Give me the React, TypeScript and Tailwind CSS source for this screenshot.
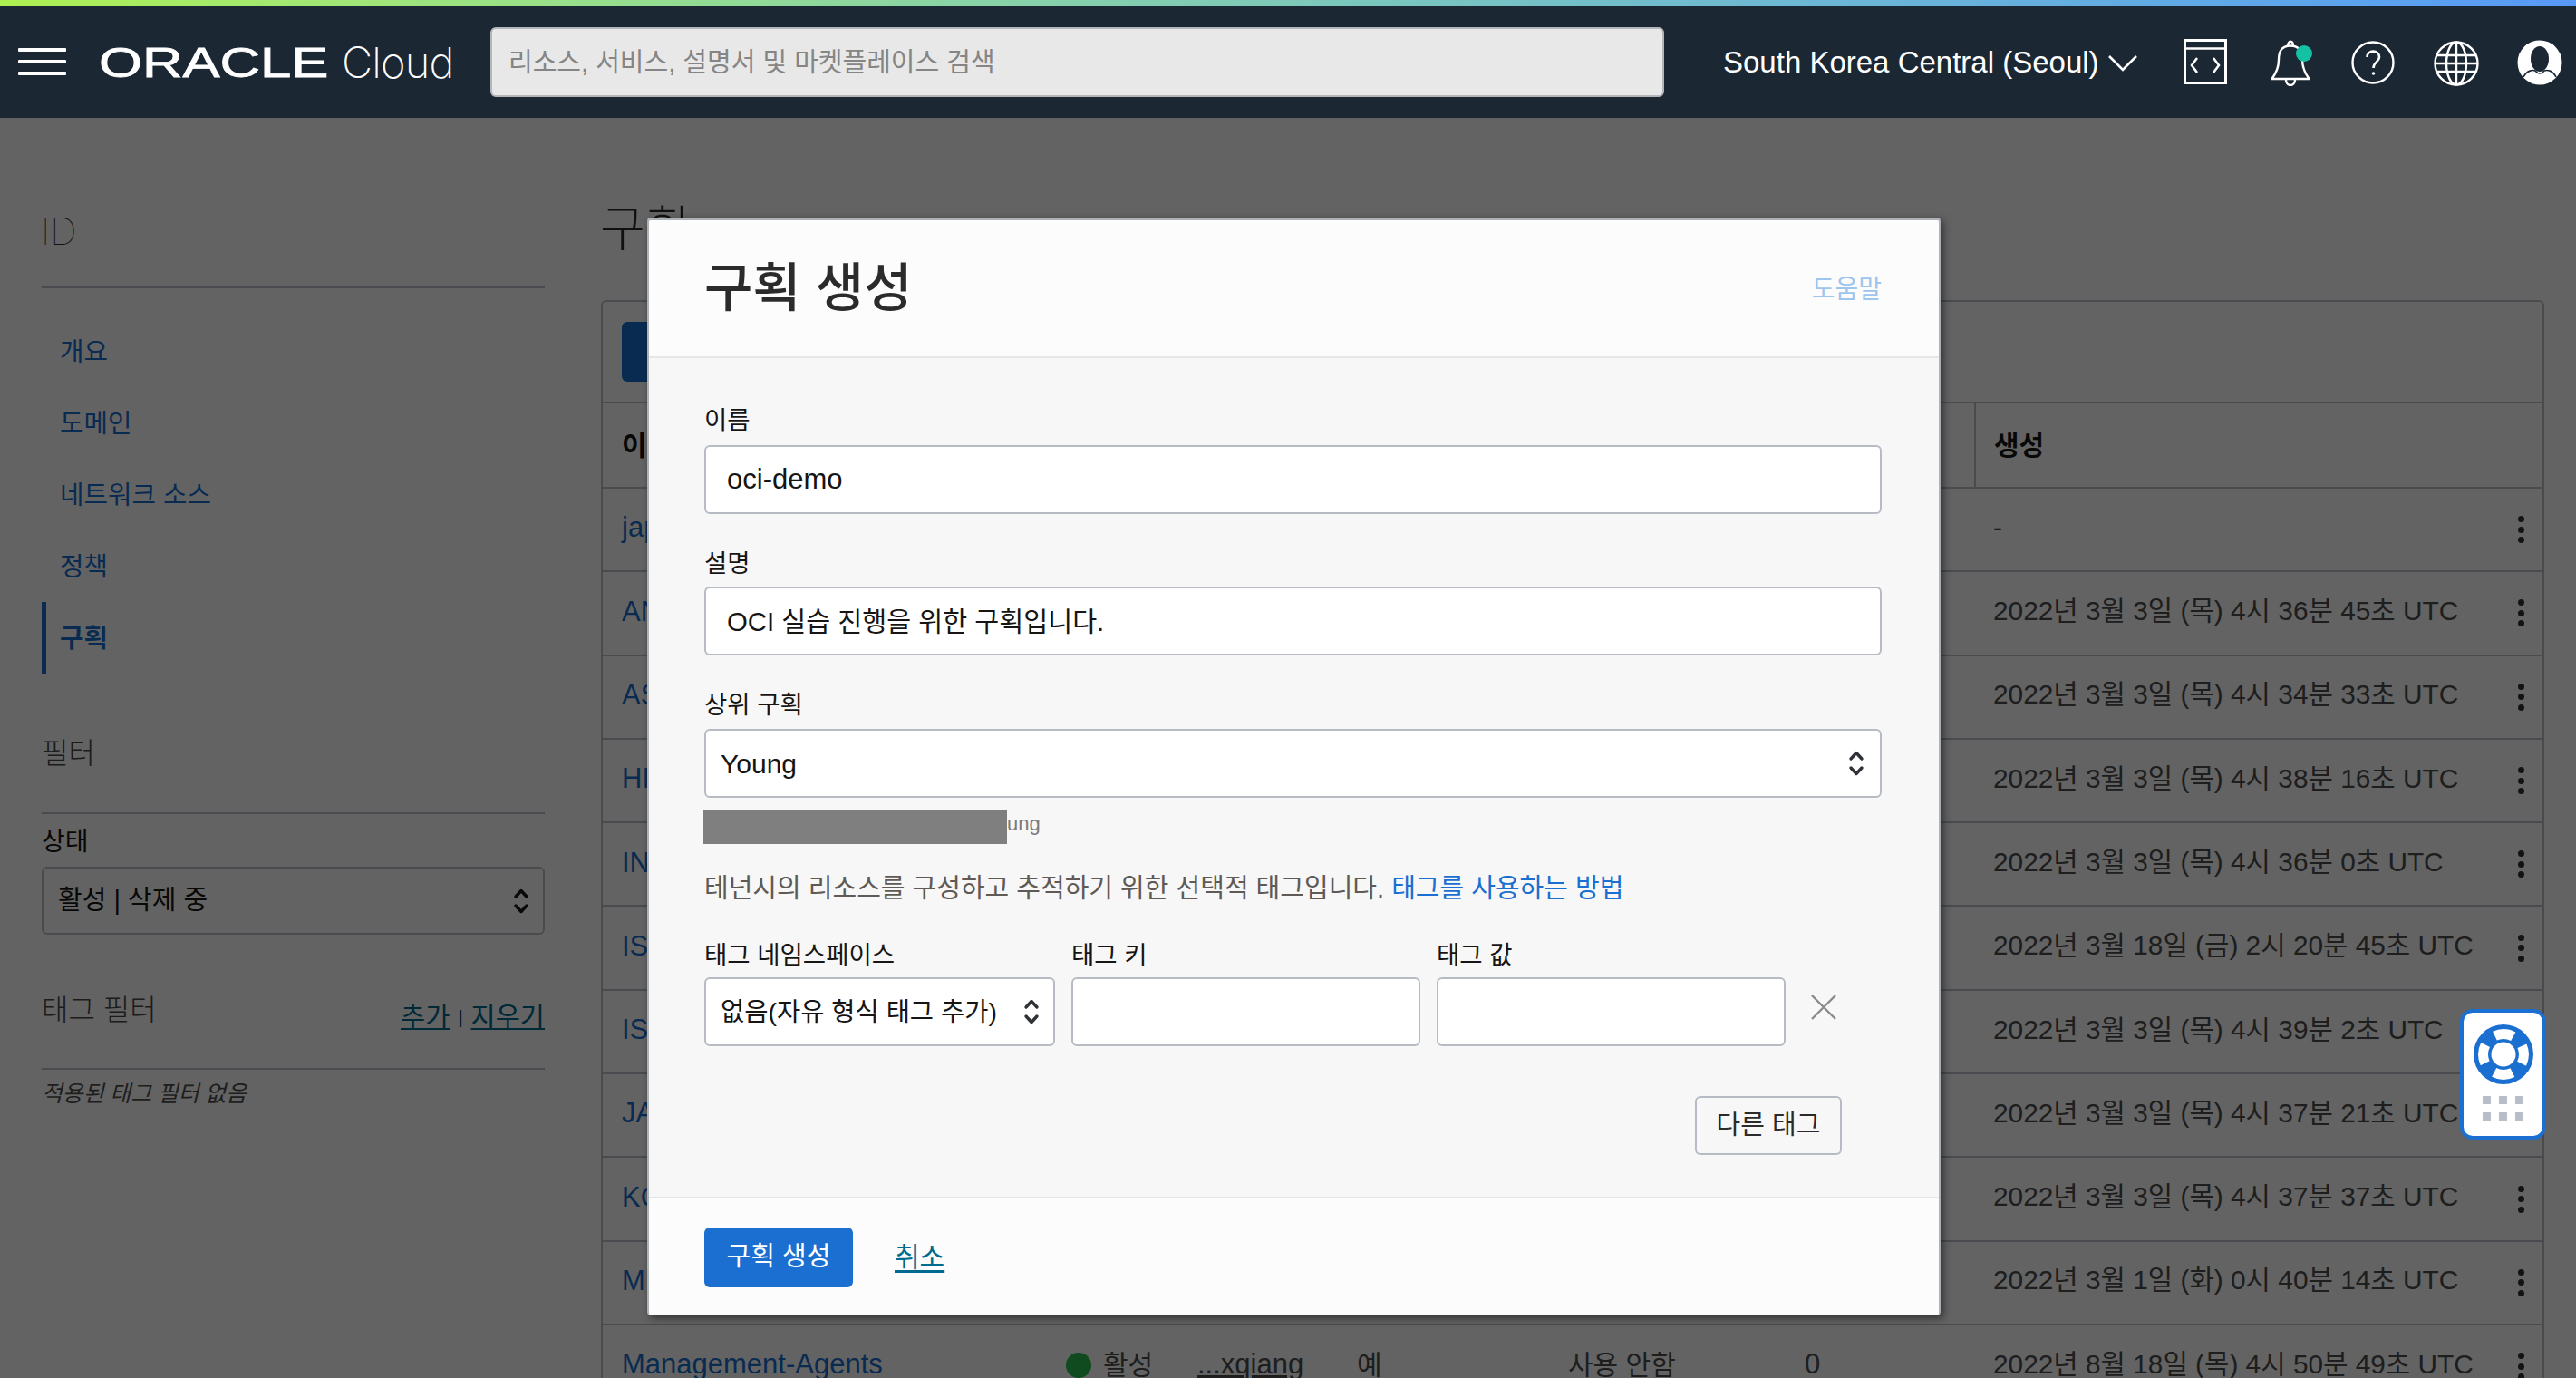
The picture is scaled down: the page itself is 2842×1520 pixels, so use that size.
import { ReactNode } from "react"

const rows = [
  { name: "jap", date: "-" },
  { name: "AN", date: "2022년 3월 3일 (목) 4시 36분 45초 UTC" },
  { name: "AS", date: "2022년 3월 3일 (목) 4시 34분 33초 UTC" },
  { name: "HI", date: "2022년 3월 3일 (목) 4시 38분 16초 UTC" },
  { name: "IN", date: "2022년 3월 3일 (목) 4시 36분 0초 UTC" },
  { name: "IS", date: "2022년 3월 18일 (금) 2시 20분 45초 UTC" },
  { name: "IS", date: "2022년 3월 3일 (목) 4시 39분 2초 UTC" },
  { name: "JA", date: "2022년 3월 3일 (목) 4시 37분 21초 UTC" },
  { name: "KO", date: "2022년 3월 3일 (목) 4시 37분 37초 UTC" },
  { name: "M", date: "2022년 3월 1일 (화) 0시 40분 14초 UTC" },
]

const navItems = ["개요", "도메인", "네트워크 소스", "정책"]

function Updown({ className }: { className: string }) {
  return (
    <svg width="20" height="32" viewBox="0 0 20 32" fill="none" stroke="currentColor" strokeWidth="3.4" strokeLinecap="round" strokeLinejoin="round" className={className}>
      <path d="M4 11 L10 4.5 L16 11" />
      <path d="M4 21 L10 27.5 L16 21" />
    </svg>
  )
}

function Kebab() {
  return (
    <div className="flex flex-col gap-[4.5px]">
      <div className="w-[7px] h-[7px] rounded-full bg-[#2f3338]" />
      <div className="w-[7px] h-[7px] rounded-full bg-[#2f3338]" />
      <div className="w-[7px] h-[7px] rounded-full bg-[#2f3338]" />
    </div>
  )
}

function Row({ name, date, children }: { name: string; date: string; children?: ReactNode }) {
  return (
    <div className="h-[92.3px] shrink-0 border-t-2 border-[#bcc2c9] flex items-center pl-[21px] text-[#4d4d4d]">
      <a className="w-[490px] -mt-[3px] text-[31px] text-[#1a6fd0] whitespace-nowrap">{name}</a>
      <div className="w-[1023px] -mt-[3px] flex items-center text-[31px] whitespace-nowrap">{children}</div>
      <div className="flex-1 -mt-[4px] text-[29.8px] whitespace-nowrap">{date}</div>
      <div className="w-[27px]">
        <Kebab />
      </div>
    </div>
  )
}

function Sidebar() {
  return (
    <aside className="w-[555px] ml-[46px] shrink-0">
      <div className="h-[188px] pt-[98px] border-b-2 border-[#bcc2c9]">
        <h2 className="text-[41px] leading-[54px] font-thin font-['Inter'] text-[#333] -ml-[1px]">ID</h2>
      </div>
      <nav className="mt-[30px] flex flex-col">
        {navItems.map((item) => (
          <a key={item} className="h-[79px] flex items-center border-l-4 border-transparent pl-[16px] pt-[2px] text-[28.8px] text-[#1a6fd0]">
            {item}
          </a>
        ))}
        <a className="h-[79px] flex items-center border-l-[5px] border-[#1a6fd0] pl-[15px] pt-[3px] text-[28.8px] font-bold text-[#1a6fd0]">구획</a>
      </nav>
      <div className="mt-[68px] h-[87px] border-b-2 border-[#bcc2c9]">
        <h3 className="text-[32px] leading-[40px] font-light text-[#4a4a4a]">필터</h3>
      </div>
      <div className="mt-[10px] h-[40px] text-[28px] leading-[42px] text-[#161513]">상태</div>
      <div className="mt-[8px] h-[75px] border-2 border-[#bcc2c9] rounded-[6px] flex items-center justify-between pl-[16px] pr-[14px] text-[29px] text-[#161513]">
        <span>활성 | 삭제 중</span>
        <Updown className="text-[#161513]" />
      </div>
      <div className="mt-[63px] h-[86px] border-b-2 border-[#bcc2c9] flex justify-between items-start">
        <h3 className="text-[32px] leading-[40px] font-light text-[#4a4a4a]">태그 필터</h3>
        <div className="mt-[8px] text-[29.5px] leading-[40px] text-[#006b8f] flex items-center gap-[9px]">
          <a className="underline">추가</a>
          <span className="text-[20px] text-[#333]">|</span>
          <a className="underline">지우기</a>
        </div>
      </div>
      <p className="mt-[10px] text-[24.8px] leading-[34px] italic text-[#4f4f4f]">적용된 태그 필터 없음</p>
    </aside>
  )
}

function Compartments() {
  return (
    <main className="w-[2144px] ml-[62px] shrink-0">
      <div className="h-[201px] pt-[96px]">
        <h1 className="text-[54px] leading-[54px] font-light text-[#312d2a] -ml-[1px]">구획</h1>
      </div>
      <div className="border-x-2 border-t-2 border-[#bcc2c9] rounded-t-[6px] flex flex-col">
        <div className="h-[110px] pt-[22px] pl-[21px]">
          <div className="w-[200px] h-[66px] rounded-[6px] bg-[#1a6fd0]" />
        </div>
        <div className="h-[94px] border-t-2 border-[#bcc2c9] flex items-stretch pl-[21px] text-[30px] font-bold text-[#161513]">
          <div className="w-[1492px] flex items-center">이</div>
          <div className="flex-1 border-l-2 border-[#bcc2c9] flex items-center pl-[20px]">생성</div>
        </div>
        {rows.map((row, i) => (
          <Row key={i} name={row.name} date={row.date} />
        ))}
        <Row name="Management-Agents" date="2022년 8월 18일 (목) 4시 50분 49초 UTC">
          <span className="w-[145px] flex items-center gap-[13px]">
            <span className="w-[28px] h-[28px] rounded-full bg-[#28c050]" />
            <span className="text-[30px]">활성</span>
          </span>
          <a className="w-[176px] underline">...xqiang</a>
          <span className="w-[233px] text-[30px]">예</span>
          <span className="w-[261px] text-[30px]">사용 안함</span>
          <span>0</span>
        </Row>
      </div>
    </main>
  )
}

function Label({ children, className = "" }: { children: ReactNode; className?: string }) {
  return <label className={`block h-[40px] text-[27.5px] leading-[43px] text-[#161513] ${className}`}>{children}</label>
}

function TextField({ value, className = "" }: { value?: string; className?: string }) {
  return (
    <input
      readOnly
      defaultValue={value}
      className={`w-full bg-white border-2 border-[#b7bcc4] rounded-[6px] px-[23px] text-[#161513] outline-none ${className}`}
    />
  )
}

function CreateDialog() {
  return (
    <div className="absolute left-[714px] top-[240px] w-[1427px] h-[1211px] flex flex-col bg-[#fcfcfc] border-t-[3px] border-x-[2px] border-[#adb2b8] border-b-0 rounded-[4px] shadow-[3px_3px_8px_rgba(0,0,0,0.5)]">
      <div className="h-[152px] shrink-0 border-b-2 border-[#e6e6e6] flex items-center justify-between pl-[61px] pr-[63px]">
        <h2 className="text-[58px] leading-none font-medium text-[#2b2b2b]">구획 생성</h2>
        <a className="mt-[3px] text-[28px] text-[#9ec5ee]">도움말</a>
      </div>
      <div className="flex-1 bg-[#f7f7f7] pl-[61px] pr-[63px] pt-[47px]">
        <Label className="mb-[9px]">이름</Label>
        <TextField value="oci-demo" className="h-[76px] text-[31px]" />

        <Label className="mt-[33px] mb-[7px]">설명</Label>
        <TextField value="OCI 실습 진행을 위한 구획입니다." className="h-[76px] pb-[4px] text-[29.3px]" />

        <Label className="mt-[33px] mb-[8px]">상위 구획</Label>
        <div className="h-[76px] bg-white border-2 border-[#b7bcc4] rounded-[6px] flex items-center justify-between pl-[16px] pr-[16px] text-[30px] text-[#161513]">
          <span>Young</span>
          <Updown className="text-[#2f3338]" />
        </div>

        <div className="mt-[14px] h-[37px] flex items-center -ml-[1px]">
          <div className="w-[335px] h-[37px] bg-[#7f7f7f]" />
          <span className="-mt-[8px] text-[22px] text-[#7a7a7a]">ung</span>
        </div>

        <p className="mt-[28px] h-[40px] text-[29px] leading-[42px] text-[#5f5a55] whitespace-nowrap">
          테넌시의 리소스를 구성하고 추적하기 위한 선택적 태그입니다. <a className="text-[#1a6fd0]">태그를 사용하는 방법</a>
        </p>

        <div className="mt-[33px] grid grid-cols-[387px_385px_385px_auto] gap-x-[18px]">
          <Label className="mb-[6px]">태그 네임스페이스</Label>
          <Label className="mb-[6px]">태그 키</Label>
          <Label className="mb-[6px]">태그 값</Label>
          <div />
          <div className="h-[76px] bg-white border-2 border-[#b7bcc4] rounded-[6px] flex items-center justify-between pl-[16px] pr-[14px] text-[28.5px] text-[#161513] whitespace-nowrap">
            <span>없음(자유 형식 태그 추가)</span>
            <Updown className="text-[#2f3338] shrink-0" />
          </div>
          <TextField className="h-[76px]" />
          <TextField className="h-[76px]" />
          <div className="h-[76px] pl-[9px] flex items-center">
            <svg width="30" height="30" viewBox="0 0 30 30" fill="none" stroke="#8a8a8a" strokeWidth="2.4" className="-mt-[10px]">
              <path d="M2 2 L28 28 M28 2 L2 28" />
            </svg>
          </div>
        </div>

        <div className="mt-[55px] flex justify-end pr-[44px]">
          <button className="w-[162px] h-[65px] border-2 border-[#b7bcc4] rounded-[6px] bg-[#f7f7f7] text-[29px] text-[#2b2b2b]">다른 태그</button>
        </div>
      </div>
      <div className="h-[131px] shrink-0 border-t-2 border-[#e6e6e6] flex items-start pl-[61px] pt-[32px] gap-[46px]">
        <button className="w-[164px] h-[66px] rounded-[6px] bg-[#1a6fd0] text-[29px] text-white">구획 생성</button>
        <a className="mt-[10px] text-[30px] text-[#006b8f] underline underline-offset-4">취소</a>
      </div>
    </div>
  )
}

function HelpWidget() {
  return (
    <div className="absolute left-[2714px] top-[1113px] w-[95px] h-[144px] bg-white border-4 border-[#1a6fd0] rounded-[14px] flex flex-col items-center pt-[13px]">
      <svg width="66" height="66" viewBox="0 0 66 66">
        <circle cx="33" cy="33" r="33" fill="#1a6fd0" />
        <circle cx="33" cy="33" r="22.5" fill="none" stroke="white" strokeWidth="11" strokeDasharray="21 14.34" strokeDashoffset="10.5" />
        <circle cx="33" cy="33" r="13.5" fill="white" />
      </svg>
      <div className="mt-[13px] grid grid-cols-3 gap-x-[9px] gap-y-[9px]">
        {[0, 1, 2, 3, 4, 5].map((i) => (
          <div key={i} className="w-[9px] h-[9px] bg-[#b9bfc9]" />
        ))}
      </div>
    </div>
  )
}

function TopBar() {
  return (
    <header className="relative z-20">
      <div className="h-[7px] bg-linear-to-r from-[#aef04f] to-[#5899f7]" />
      <div className="h-[123px] bg-[#1c2734] flex items-center text-white">
        <div className="ml-[20px] w-[53px] flex flex-col gap-[9px] -mt-[2px]">
          <div className="h-[4px] rounded-[1px] bg-white" />
          <div className="h-[4px] rounded-[1px] bg-white" />
          <div className="h-[4px] rounded-[1px] bg-white" />
        </div>
        <div className="ml-[36px] w-[268px] mt-[1px] whitespace-nowrap flex items-baseline">
          <span className="font-['Liberation_Sans'] text-[46px] leading-none inline-block origin-left scale-x-[1.34] [-webkit-text-stroke:0.8px_white]">ORACLE</span>
        </div>
        <span className="font-['Inter'] font-extralight text-[47px] leading-none w-[121px] tracking-[-0.8px]">Cloud</span>
        <div className="ml-[43px] w-[1295px] h-[77px] bg-[#e8e8e8] rounded-[6px] border-2 border-[#b3b7bb] flex items-center pl-[18px] pt-[2px] text-[29px] text-[#858585] whitespace-nowrap">
          리소스, 서비스, 설명서 및 마켓플레이스 검색
        </div>
        <span className="ml-[65px] text-[33px] whitespace-nowrap">South Korea Central (Seoul)</span>
        <svg width="32" height="18" viewBox="0 0 32 18" fill="none" stroke="white" strokeWidth="2.6" className="ml-[10px] mt-[3px]">
          <path d="M1 1 L16 16 L31 1" />
        </svg>
        <svg width="48" height="50" viewBox="0 0 48 50" fill="none" stroke="white" className="ml-[51px] -mt-[1px]">
          <rect x="1.5" y="1.5" width="45" height="47" strokeWidth="3" />
          <path d="M1.5 10.5 H46.5" strokeWidth="2.5" />
          <path d="M15 21 L9 29 L15 37 M33 21 L39 29 L33 37" strokeWidth="2.5" />
        </svg>
        <div className="relative ml-[48px] mt-[1px] w-[44px] h-[51px]">
          <svg width="44" height="51" viewBox="0 0 44 51" fill="none" stroke="white" strokeWidth="2.4">
            <path d="M19 7 C19 0 25 0 25 7" />
            <path d="M22 6.5 C12 6.5 9 13 9 22 C9 31 6 37 1.5 43 H42.5 C38 37 35 31 35 22 C35 13 32 6.5 22 6.5 Z" strokeLinejoin="round" />
            <path d="M17 44 C17 52 27 52 27 44" />
          </svg>
          <div className="absolute left-[28px] top-[6px] w-[18px] h-[18px] rounded-full bg-[#14c2a3]" />
        </div>
        <svg width="48" height="48" viewBox="0 0 48 48" fill="none" stroke="white" strokeWidth="2.4" className="ml-[45px]">
          <circle cx="24" cy="24" r="22.5" />
          <path d="M17.5 18 C17.5 9.5 31 9.5 31 18 C31 23 24.5 23.5 24.5 30" strokeWidth="2.6" />
          <circle cx="24.5" cy="36" r="1.8" fill="white" stroke="none" />
        </svg>
        <svg width="50" height="50" viewBox="0 0 50 50" fill="none" stroke="white" strokeWidth="2.4" className="ml-[43px] mt-[3px]">
          <circle cx="25" cy="25" r="23.5" />
          <ellipse cx="25" cy="25" rx="11" ry="23.5" />
          <path d="M25 1.5 V48.5 M3 16 H47 M1.5 25 H48.5 M3 34 H47" />
        </svg>
        <svg width="50" height="50" viewBox="0 0 50 50" className="ml-[42px]">
          <circle cx="25" cy="25" r="24.5" fill="white" />
          <ellipse cx="25" cy="21" rx="10" ry="14" fill="#1c2734" />
          <path d="M7 41 C11 33 18 33 20 34 C23 38 27 38 30 34 C33 33 39 33 43 41" fill="none" stroke="#1c2734" strokeWidth="1.6" />
        </svg>
      </div>
    </header>
  )
}

export default function App() {
  return (
    <div className="relative h-screen overflow-hidden bg-white font-['Liberation_Sans','Noto_Sans_CJK_KR',sans-serif]">
      <TopBar />
      <div className="flex">
        <Sidebar />
        <Compartments />
      </div>
      {/* dim layer sits under the header, dialog and help widget */}
      <div className="absolute inset-x-0 top-[130px] bottom-0 bg-black/[0.61]" />
      <CreateDialog />
      <HelpWidget />
    </div>
  )
}
